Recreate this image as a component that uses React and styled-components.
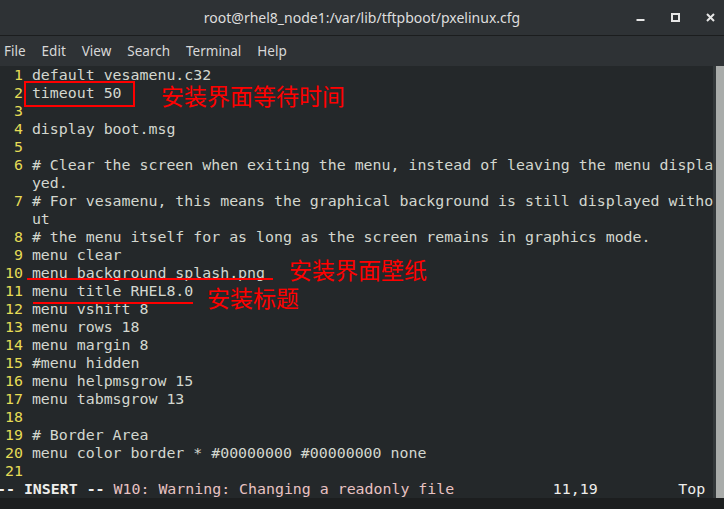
import React from "react";
import styled, { createGlobalStyle } from "styled-components";

const Global = createGlobalStyle`
  html, body {
    margin: 0;
    padding: 0;
    background: #1c1e1f;
    overflow: hidden;
  }
`;

const Window = styled.div`
  width: 724px;
  height: 509px;
  display: flex;
  flex-direction: column;
  background: #1c1e1f;
  overflow: hidden;
`;

const TitleBar = styled.div`
  height: 35px;
  flex: none;
  display: grid;
  grid-template-columns: 1fr auto 1fr;
  align-items: center;
  background: #2e3235;
  border-bottom: 1px solid #1b1d1e;
`;

const Title = styled.div`
  grid-column: 2;
  font-family: "Noto Sans", "Open Sans", sans-serif;
  font-size: 14px;
  color: #dedede;
  padding-bottom: 1px;
`;

const Controls = styled.div`
  grid-column: 3;
  justify-self: end;
  display: flex;
  align-items: center;
  gap: 26px;
  padding-right: 9px;
  color: #e6e6e6;
`;

const MenuBar = styled.div`
  height: 30px;
  flex: none;
  display: flex;
  align-items: center;
  gap: 16px;
  padding-left: 4px;
  background: #2e3235;
`;

const MenuItem = styled.span`
  font-family: "Noto Sans", "Open Sans", sans-serif;
  font-size: 13.5px;
  color: #d8d8d8;
`;

const TermArea = styled.div`
  height: 432px;
  flex: none;
  display: flex;
  background: #24282a;
`;

const Screen = styled.div`
  flex: 1;
  position: relative;
  overflow: hidden;
`;

const Lines = styled.div`
  padding-left: 5px;
  font-family: "DejaVu Sans Mono", "Liberation Mono", monospace;
  font-size: 14.9px;
  line-height: 18px;
  color: #d3d7cf;
`;

const Row = styled.div`
  height: 18px;
  white-space: pre;
`;

const Num = styled.span`
  color: #e6dc56;
`;

const Status = styled(Row)`
  margin-left: -8px;
  color: #eeeeec;
`;

const Mode = styled.span`
  font-weight: bold;
  color: #eeeeec;
`;

const Warn = styled.span`
  color: #e8c2c2;
`;

const ScrollTrack = styled.div`
  width: 8px;
  flex: none;
  display: flex;
  background: #33383a;
  padding-left: 3px;
`;

const ScrollThumb = styled.div`
  flex: 1;
  background: #a9acaa;
`;

const BottomStrip = styled.div`
  flex: 1;
  background: #1c1e1f;
`;

const Box = styled.div`
  position: absolute;
  left: 24px;
  top: 15px;
  width: 107px;
  height: 22px;
  border: 2px solid #ff0000;
`;

const Note = styled.div`
  position: absolute;
  left: ${(p) => p.x}px;
  top: ${(p) => p.y}px;
  font-family: "Noto Sans CJK SC", "Noto Sans", sans-serif;
  font-size: 23px;
  line-height: 24px;
  color: #ff0000;
  white-space: nowrap;
`;

const Underline = styled.div`
  position: absolute;
  left: ${(p) => p.x}px;
  top: ${(p) => p.y}px;
  width: ${(p) => p.w}px;
  height: 2px;
  background: #ff0000;
`;

const rows = [
  [1, "default vesamenu.c32"],
  [2, "timeout 50"],
  [3, ""],
  [4, "display boot.msg"],
  [5, ""],
  [6, "# Clear the screen when exiting the menu, instead of leaving the menu displa"],
  [null, "yed."],
  [7, "# For vesamenu, this means the graphical background is still displayed witho"],
  [null, "ut"],
  [8, "# the menu itself for as long as the screen remains in graphics mode."],
  [9, "menu clear"],
  [10, "menu background splash.png"],
  [11, "menu title RHEL8.0"],
  [12, "menu vshift 8"],
  [13, "menu rows 18"],
  [14, "menu margin 8"],
  [15, "#menu hidden"],
  [16, "menu helpmsgrow 15"],
  [17, "menu tabmsgrow 13"],
  [18, ""],
  [19, "# Border Area"],
  [20, "menu color border * #00000000 #00000000 none"],
  [21, ""],
];

const menus = ["File", "Edit", "View", "Search", "Terminal", "Help"];

// vim number column: two digits then a space (first column falls off-screen)
const gutter = (n) => (n == null ? "   " : String(n).padStart(2, " ") + " ");

const App = () => {
  const msg = " W10: Warning: Changing a readonly file";
  const pad = " ".repeat(62 - 12 - msg.length);

  return (
    <Window>
      <Global />
      <TitleBar>
        <Title>root@rhel8_node1:/var/lib/tftpboot/pxelinux.cfg</Title>
        <Controls>
          <svg width="9" height="9" viewBox="0 0 9 9">
            <rect x="0.5" y="6" width="8" height="2" fill="currentColor" />
          </svg>
          <svg width="9" height="9" viewBox="0 0 9 9">
            <rect x="1" y="1" width="7" height="7" fill="none" stroke="currentColor" strokeWidth="2" />
          </svg>
          <svg width="9" height="9" viewBox="0 0 9 9">
            <path d="M1 1 L8 8 M8 1 L1 8" stroke="currentColor" strokeWidth="2" />
          </svg>
        </Controls>
      </TitleBar>
      <MenuBar>
        {menus.map((m) => (
          <MenuItem key={m}>{m}</MenuItem>
        ))}
      </MenuBar>
      <TermArea>
        <Screen>
          <Lines>
            {rows.map(([n, text], i) => (
              <Row key={i}>
                <Num>{gutter(n)}</Num>
                {text}
              </Row>
            ))}
            <Status>
              <Mode>-- INSERT --</Mode>
              <Warn>{msg}</Warn>
              {pad}
              {"11,19         Top"}
            </Status>
          </Lines>
          <Box />
          <Note x={161} y={17}>安装界面等待时间</Note>
          <Underline x={27} y={212} w={246} />
          <Note x={289} y={191}>安装界面壁纸</Note>
          <Underline x={33} y={236} w={160} />
          <Note x={207} y={219}>安装标题</Note>
        </Screen>
        <ScrollTrack>
          <ScrollThumb />
        </ScrollTrack>
      </TermArea>
      <BottomStrip />
    </Window>
  );
};

export default App;
